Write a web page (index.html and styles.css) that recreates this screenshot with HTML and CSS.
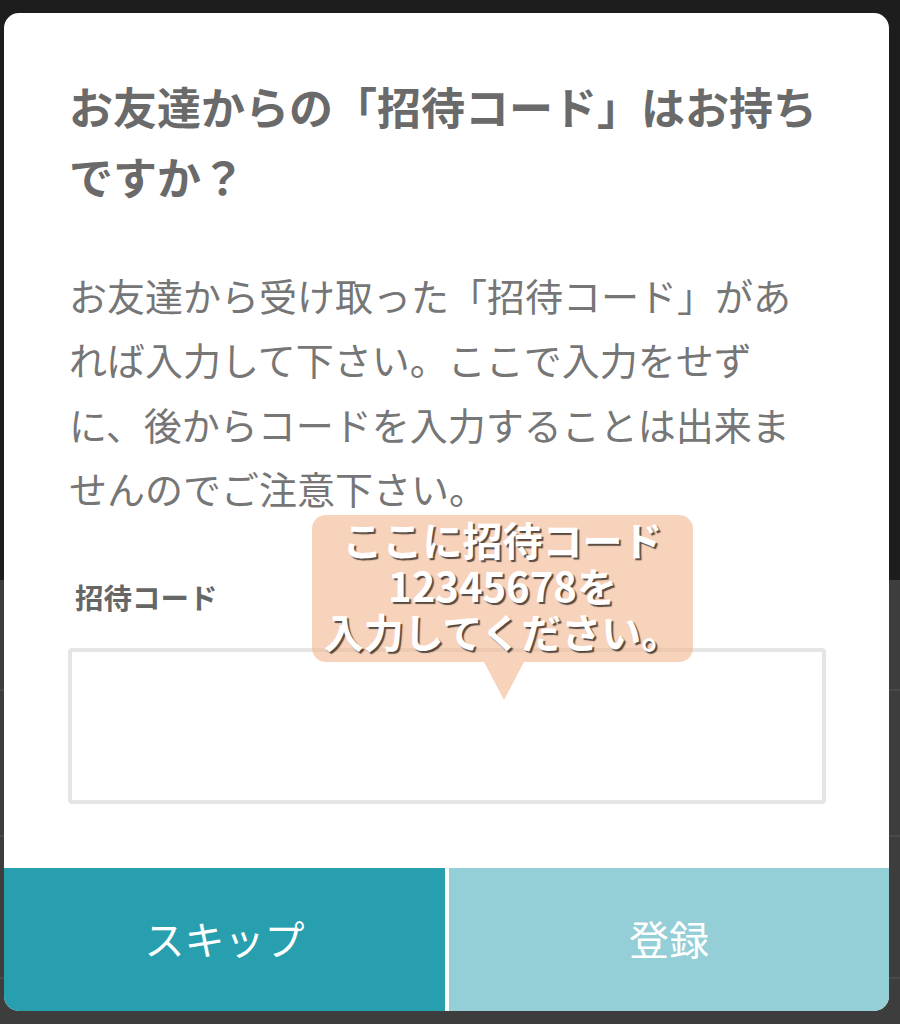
FILE: index.html
```html
<!DOCTYPE html>
<html lang="ja">
<head>
<meta charset="utf-8">
<title>招待コード</title>
<link rel="stylesheet" href="styles.css">
</head>
<body>
<div class="modal">
  <div class="modal-body">
    <h1 class="title">お友達からの「招待コード」はお持ちですか？</h1>
    <p class="desc">お友達から受け取った「招待コード」があれば入力して下さい。ここで入力をせずに、後からコードを入力することは出来ませんのでご注意下さい。</p>
    <label class="label" for="code">招待コード</label>
    <input class="input" id="code" type="text">
  </div>
  <div class="actions">
    <button class="btn btn-skip">スキップ</button>
    <button class="btn btn-submit">登録</button>
  </div>
  <div class="tip">
    <div class="tip-text">ここに招待コード<br>12345678を<br>入力してください。</div>
  </div>
</div>
</body>
</html>
```
FILE: styles.css
```css
html, body {
  margin: 0;
  padding: 0;
}
body {
  width: 900px;
  height: 1024px;
  overflow: hidden;
  font-family: "Noto Sans CJK JP", "Noto Sans", sans-serif;
  background: linear-gradient(to bottom,
    #1d1d1d 0, #1d1d1d 580px,
    #3d3d3d 580px, #3d3d3d 689px,
    #4a4a4a 689px, #4a4a4a 691px,
    #3d3d3d 691px, #3d3d3d 835px,
    #4a4a4a 835px, #4a4a4a 837px,
    #3d3d3d 837px, #3d3d3d 977px,
    #4a4a4a 977px, #4a4a4a 979px,
    #3d3d3d 979px);
  padding-top: 13px;
  box-sizing: border-box;
}
.modal {
  position: relative;
  margin-left: 4px;
  width: 885px;
  height: 998px;
  background: #ffffff;
  border-radius: 15px;
  overflow: hidden;
  display: flex;
  flex-direction: column;
}
.modal-body {
  padding: 58px 63px 0 64px;
  display: flex;
  flex-direction: column;
}
.title {
  margin: 0;
  font-size: 44px;
  line-height: 70px;
  font-weight: 700;
  color: #6a6a6a;
  padding-left: 1px;
}
.desc {
  margin: 52px 0 0;
  font-size: 38px;
  line-height: 64.3px;
  font-weight: 400;
  color: #767676;
  padding-left: 1px;
}
.label {
  margin-top: 57px;
  font-size: 28.5px;
  line-height: 40px;
  font-weight: 700;
  color: #666666;
  padding-left: 7px;
}
.input {
  margin-top: 31px;
  width: 758px;
  height: 156px;
  box-sizing: border-box;
  border: 4px solid #e5e5e5;
  border-radius: 4px;
  background: #fff;
  outline: none;
}
.actions {
  margin-top: auto;
  display: flex;
  gap: 4px;
  height: 143px;
}
.btn {
  flex: 1;
  border: none;
  margin: 0;
  padding: 0 0 4px;
  font-family: "Noto Sans CJK JP", "Noto Sans", sans-serif;
  font-size: 40px;
  font-weight: 400;
  color: #ffffff;
  cursor: pointer;
}
.btn-skip {
  flex: 0 0 441px;
  background: #279fae;
}
.btn-submit {
  background: #94ced6;
}
.tip {
  position: absolute;
  left: 308px;
  top: 502px;
  width: 381px;
  height: 147px;
  border-radius: 14px;
  background: rgba(243, 182, 142, 0.6);
  display: flex;
  justify-content: center;
}
.tip::after {
  content: "";
  position: absolute;
  left: 172px;
  top: 147px;
  border-left: 20px solid transparent;
  border-right: 20px solid transparent;
  border-top: 38px solid rgba(243, 182, 142, 0.6);
}
.tip-text {
  padding-top: 1px;
  font-size: 40px;
  line-height: 46px;
  font-weight: 700;
  color: #ffffff;
  text-align: center;
  white-space: nowrap;
  text-shadow: 2px 2px 1px rgba(0, 0, 0, 0.65);
}
```
